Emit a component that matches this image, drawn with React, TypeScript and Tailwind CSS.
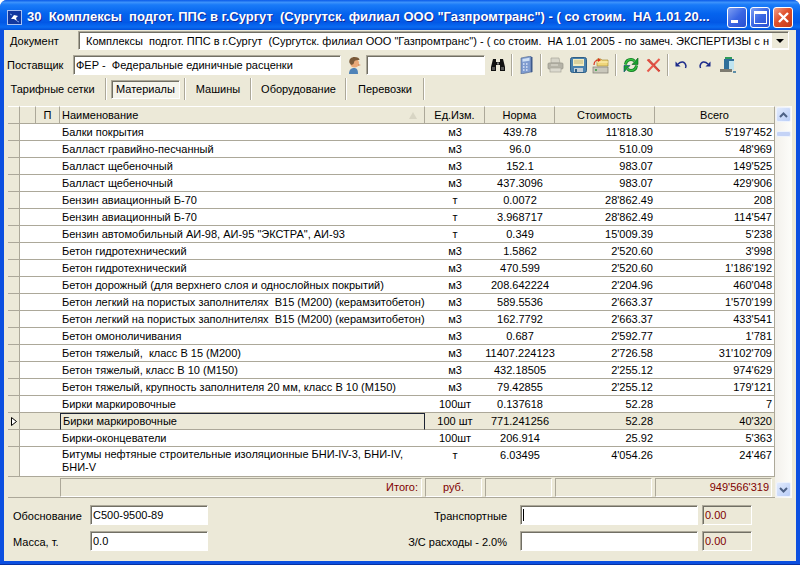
import type { ReactNode } from 'react';

const rows = [
  ['Балки покрытия', 'м3', '439.78', "11'818.30", "5'197'452"],
  ['Балласт гравийно-песчанный', 'м3', '96.0', '510.09', "48'969"],
  ['Балласт щебеночный', 'м3', '152.1', '983.07', "149'525"],
  ['Балласт щебеночный', 'м3', '437.3096', '983.07', "429'906"],
  ['Бензин авиационный Б-70', 'т', '0.0072', "28'862.49", '208'],
  ['Бензин авиационный Б-70', 'т', '3.968717', "28'862.49", "114'547"],
  ['Бензин автомобильный АИ-98, АИ-95 "ЭКСТРА", АИ-93', 'т', '0.349', "15'009.39", "5'238"],
  ['Бетон гидротехнический', 'м3', '1.5862', "2'520.60", "3'998"],
  ['Бетон гидротехнический', 'м3', '470.599', "2'520.60", "1'186'192"],
  ['Бетон дорожный (для верхнего слоя и однослойных покрытий)', 'м3', '208.642224', "2'204.96", "460'048"],
  ['Бетон легкий на пористых заполнителях  В15 (М200) (керамзитобетон)', 'м3', '589.5536', "2'663.37", "1'570'199"],
  ['Бетон легкий на пористых заполнителях  В15 (М200) (керамзитобетон)', 'м3', '162.7792', "2'663.37", "433'541"],
  ['Бетон омоноличивания', 'м3', '0.687', "2'592.77", "1'781"],
  ['Бетон тяжелый,  класс В 15 (М200)', 'м3', '11407.224123', "2'726.58", "31'102'709"],
  ['Бетон тяжелый, класс В 10 (М150)', 'м3', '432.18505', "2'255.12", "974'629"],
  ['Бетон тяжелый, крупность заполнителя 20 мм, класс В 10 (М150)', 'м3', '79.42855', "2'255.12", "179'121"],
  ['Бирки маркировочные', '100шт', '0.137618', '52.28', '7'],
  ['Бирки маркировочные', '100 шт', '771.241256', '52.28', "40'320"],
  ['Бирки-оконцеватели', '100шт', '206.914', '25.92', "5'363"],
  ['Битумы нефтяные строительные изоляционные БНИ-IV-3, БНИ-IV, БНИ-V', 'т', '6.03495', "4'054.26", "24'467"],
];

const SELECTED = 17;
const sunken =
  'border border-t-[#aca899] border-l-[#aca899] border-r-white border-b-white shadow-[inset_1px_1px_0_#716f64]';

function ToolSep() {
  return <div className="mx-[3px] h-[22px] w-[2px] shrink-0 border-l border-r border-l-[#aca899] border-r-white" />;
}

function AppIcon() {
  return (
    <svg width="15" height="15" viewBox="0 0 15 15" className="shrink-0">
      <rect x="0.5" y="0.5" width="14" height="14" fill="#12389f" stroke="#a9c2f2" />
      <path d="M4 9l3-4 4 1-2 2 1 3-3-2z" fill="#fff" />
      <path d="M3 4l2 1M10 11l2 1" stroke="#7fa4ee" />
    </svg>
  );
}

function WinButton({ kind }: { kind: 'min' | 'max' | 'close' }) {
  const bg =
    kind === 'close'
      ? 'bg-[linear-gradient(135deg,#f0a08a,#e0502c_45%,#c23a18)]'
      : 'bg-[linear-gradient(135deg,#7f9ff2,#3a66e4_50%,#2a4fd0)]';
  return (
    <div className={`flex h-[21px] w-[20px] items-center justify-center rounded-[3px] border border-white ${bg}`}>
      {kind === 'min' && <div className="mt-[8px] mr-[5px] h-[3px] w-[7px] bg-white" />}
      {kind === 'max' && <div className="h-[13px] w-[13px] border border-t-[3px] border-white" />}
      {kind === 'close' && (
        <svg width="13" height="13" viewBox="0 0 13 13">
          <path d="M2 2l9 9M11 2l-9 9" stroke="#fff" strokeWidth="2.4" />
        </svg>
      )}
    </div>
  );
}

function Person() {
  return (
    <svg width="16" height="20" viewBox="0 0 16 20">
      <path d="M3 19c0-4 2-6 5-6s4 2 4 6z" fill="#4f83b8" />
      <circle cx="8.5" cy="8" r="4.5" fill="#e8a878" />
      <path d="M3.5 8c-1-4 2-6 5-6s5 1 5 3c-2 0-4 0-5 1l-1 3-2 1z" fill="#7a5a3a" />
      <path d="M12 9l3 1-3 1z" fill="#d98a5a" />
    </svg>
  );
}

function Binoculars() {
  return (
    <svg width="16" height="16" viewBox="0 0 16 16">
      <path d="M3 2h3v3h4V2h3l2 8v4H10V8H6v6H1v-4z" fill="#111" />
      <rect x="2" y="10" width="3" height="3" fill="#555" />
      <rect x="11" y="10" width="3" height="3" fill="#555" />
      <rect x="7" y="5.5" width="2" height="2" fill="#888" />
    </svg>
  );
}

function Calc() {
  return (
    <svg width="13" height="18" viewBox="0 0 13 18">
      <path d="M1 2l10-2v16l-10 2z" fill="#7f9cd0" stroke="#51668c" strokeWidth="0.6" />
      <path d="M2.5 3l7-1.2v3l-7 1z" fill="#cfe0f5" />
      <path d="M3 8h1.500M6 8h1.500M3 11h1.500M6 11h1.500M3 14h1.500M6 14h1.500" stroke="#dfe8f7" strokeWidth="1.300" />
      <path d="M11 1h1.500v15l-1.500 .5z" fill="#3d5a8c" />
    </svg>
  );
}

function Printer() {
  return (
    <svg width="17" height="16" viewBox="0 0 17 16">
      <path d="M4 1h8l1 5H4z" fill="#d6d4c8" stroke="#a9a79b" strokeWidth="0.7" />
      <rect x="1" y="6" width="15" height="6" rx="1" fill="#b5b3a7" stroke="#97958a" strokeWidth="0.7" />
      <rect x="3" y="11" width="11" height="4" fill="#dcdacf" stroke="#a9a79b" strokeWidth="0.7" />
      <path d="M4 8h7" stroke="#e2e0d5" />
    </svg>
  );
}

function Save() {
  return (
    <svg width="17" height="16" viewBox="0 0 17 16">
      <rect x="0.5" y="0.5" width="16" height="15" rx="2" fill="#4a82ae" stroke="#2f5f86" />
      <rect x="3" y="2" width="11" height="7" fill="#f3ecc0" />
      <path d="M4 4h9M4 6h9" stroke="#c2b67a" />
      <rect x="4" y="11" width="9" height="4" fill="#c4cfd8" />
      <rect x="5" y="12" width="2" height="3" fill="#2f5f86" />
    </svg>
  );
}

function OpenFile() {
  return (
    <svg width="17" height="18" viewBox="0 0 17 18">
      <path d="M5 3h4l1 1h6v6H5z" fill="#efd67a" stroke="#a98f3a" strokeWidth="0.7" />
      <path d="M5 6h11" stroke="#fff3bd" />
      <rect x="1" y="11" width="15" height="6" fill="#c9c7bb" stroke="#7f7d72" strokeWidth="0.7" />
      <path d="M3 14h2" stroke="#2f9a3a" strokeWidth="1.400" />
      <path d="M2 9c0-3 2-5 5-5" fill="none" stroke="#d8341c" strokeWidth="1.200" />
      <path d="M6 2l3 2-3 2z" fill="#d8341c" />
    </svg>
  );
}

function Refresh() {
  return (
    <svg width="16" height="16" viewBox="0 0 16 16">
      <path d="M2.500 7.500C3 4 5.500 2.500 8 2.500c1.500 0 2.500 .5 3.500 1.500" fill="none" stroke="#0f7a22" strokeWidth="3" />
      <path d="M2.500 7.500C3 4 5.500 2.500 8 2.500c1.500 0 2.500 .5 3.500 1.500" fill="none" stroke="#35c23f" strokeWidth="1.400" />
      <path d="M15 1v6.500H9z" fill="#16a02c" stroke="#0b5a16" strokeWidth="0.6" />
      <path d="M13.500 8.500C13 12 10.500 13.500 8 13.500c-1.500 0-2.500-.5-3.500-1.500" fill="none" stroke="#0f7a22" strokeWidth="3" />
      <path d="M13.500 8.500C13 12 10.500 13.500 8 13.500c-1.500 0-2.500-.5-3.500-1.500" fill="none" stroke="#35c23f" strokeWidth="1.400" />
      <path d="M1 15V8.500h6z" fill="#16a02c" stroke="#0b3f7a" strokeWidth="0.6" />
    </svg>
  );
}

function RedX() {
  return (
    <svg width="15" height="15" viewBox="0 0 15 15">
      <path d="M1.500 1.500L13.500 13.500" stroke="#e0483c" strokeWidth="2" />
      <path d="M13.500 1L1.500 13.500" stroke="#e8584a" strokeWidth="2" />
      <path d="M3 1l11 12" stroke="#a52820" strokeWidth="0.6" />
    </svg>
  );
}

function Arrow({ flip }: { flip?: boolean }) {
  return (
    <svg width="13" height="10" viewBox="0 0 13 10" className={flip ? '-scale-x-100' : ''}>
      <path d="M3 4c3-3 7-3 8 2l-.5 2" fill="none" stroke="#1b2a8a" strokeWidth="1.400" />
      <path d="M0.500 1.500l0 5 5 0z" fill="#1b2a8a" />
    </svg>
  );
}

function ExitDoor() {
  return (
    <svg width="17" height="18" viewBox="0 0 17 18">
      <rect x="5" y="1" width="7" height="2" fill="#2f9a5a" />
      <rect x="4" y="3" width="10" height="11" fill="#2f6f9a" />
      <rect x="9" y="5" width="5" height="9" fill="#bfe4f0" />
      <rect x="0" y="13" width="12" height="3" fill="#7d7b70" />
      <path d="M13 16l3 0" stroke="#2f6f9a" strokeWidth="1.500" />
    </svg>
  );
}

function ScrollButton({ down }: { down?: boolean }) {
  return (
    <div className="flex h-[15px] w-[15px] items-center justify-center rounded-[2px] border border-[#eef3fd] bg-[linear-gradient(135deg,#e2ebfd,#b9cdf7)]">
      <svg width="9" height="6" viewBox="0 0 9 6" className={down ? 'rotate-180' : ''}>
        <path d="M1 5l3.500-3.500L8 5" fill="none" stroke="#4d6185" strokeWidth="2" />
      </svg>
    </div>
  );
}

function Tab({ label, className, active }: { label: string; className: string; active?: boolean }) {
  return (
    <button
      type="button"
      className={`flex h-[19px] shrink-0 items-center justify-center ${className} ${active ? `${sunken} bg-[#f5f4ec]` : ''}`}
    >
      {label}
    </button>
  );
}

function Etched() {
  return <div className="h-[22px] w-[2px] shrink-0 border-l border-r border-l-[#aca899] border-r-white" />;
}

function Th({ children, className = '' }: { children?: ReactNode; className?: string }) {
  return (
    <th className={`h-[18px] overflow-hidden border-r border-b border-t border-t-white border-r-[#aca899] border-b-[#aca899] bg-[#ece9d8] p-0 text-center font-normal ${className}`}>
      {children}
    </th>
  );
}

function FootCell({ children, className = '' }: { children?: ReactNode; className?: string }) {
  return (
    <td className="h-[21px] border-b border-b-[#aca899] p-0 pr-[3px]">
      <div className={`flex h-[19px] items-center border border-t-[#aca899] border-l-[#aca899] border-r-white border-b-white text-[#800000] ${className}`}>
        {children}
      </div>
    </td>
  );
}

export default function App() {
  return (
    <div className="flex h-[565px] w-[800px] flex-col overflow-hidden rounded-t-[7px] bg-[#0b4fe0] font-['Liberation_Sans',Arial,sans-serif] text-[11px] leading-[14px] text-black">
      {/* Title bar */}
      <div className="flex h-[30px] shrink-0 items-center bg-[linear-gradient(180deg,#0a5ae8_0%,#3c92fb_8%,#1a7bf8_16%,#0564ee_45%,#0258e6_75%,#0a6cf2_90%,#0350d8_100%)] pt-[4px] pr-[7px] pl-[7px]">
        <AppIcon />
        <div className="ml-[5px] flex-1 overflow-hidden whitespace-pre text-[13px] font-bold text-white [text-shadow:1px_1px_0_#0f2a9a]">
          {'30  Комплексы  подгот. ППС в г.Сургут  (Сургутск. филиал ООО "Газпромтранс") - ( со стоим.  НА 1.01 20...'}
        </div>
        <div className="flex gap-[3px]">
          <WinButton kind="min" />
          <WinButton kind="max" />
          <WinButton kind="close" />
        </div>
      </div>

      {/* Window body */}
      <div className="mx-[4px] flex flex-1 flex-col bg-[#ece9d8]">
        {/* Document */}
        <div className="flex h-[24px] shrink-0 pt-[1px]">
          <div className="flex h-[19px] w-[74px] items-center pl-[6px]">Документ</div>
          <div className={`flex h-[19px] w-[711px] items-center bg-white pl-[7px] ${sunken}`}>
            <div className="flex-1 overflow-hidden whitespace-pre">
              {'Комплексы  подгот. ППС в г.Сургут  (Сургутск. филиал ООО "Газпромтранс") - ( со стоим.  НА 1.01 2005 - по замеч. ЭКСПЕРТИЗЫ с н'}
            </div>
            <div className="flex h-[15px] w-[16px] shrink-0 items-center justify-center bg-[#ece9d8]">
              <div className="h-0 w-0 border-x-[4px] border-t-[4px] border-x-transparent border-t-black" />
            </div>
          </div>
        </div>

        {/* Supplier + toolbar */}
        <div className="flex h-[24px] shrink-0 items-start pt-[1px]">
          <div className="flex h-[20px] w-[69px] items-center pl-[3px]">Поставщик</div>
          <div className={`flex h-[20px] w-[268px] items-center whitespace-pre bg-white pl-[2px] ${sunken}`}>{'ФЕР -  Федеральные единичные расценки'}</div>
          <div className="flex h-[20px] w-[25px] items-center justify-center pl-[1px]">
            <Person />
          </div>
          <div className={`h-[20px] w-[119px] bg-white ${sunken}`} />
          <div className="flex h-[20px] items-center">
            <div className="mr-[2px] ml-[5px]"><Binoculars /></div>
            <ToolSep />
            <div className="mr-[4px] ml-[4px]"><Calc /></div>
            <ToolSep />
            <div className="ml-[2px]"><Printer /></div>
            <div className="ml-[6px]"><Save /></div>
            <div className="mr-[3px] ml-[5px]"><OpenFile /></div>
            <ToolSep />
            <div className="ml-[3px]"><Refresh /></div>
            <div className="mr-[3px] ml-[7px]"><RedX /></div>
            <ToolSep />
            <div className="ml-[3px]"><Arrow /></div>
            <div className="ml-[10px]"><Arrow flip /></div>
            <div className="ml-[9px]"><ExitDoor /></div>
          </div>
        </div>

        {/* Tabs */}
        <div className="flex h-[28px] shrink-0 items-start">
          <div className="flex h-[22px] items-center">
            <Tab label="Тарифные сетки" className="w-[101px] pr-[4px]" />
            <Etched />
            <div className="w-[4px]" />
            <Tab label="Материалы" className="w-[69px]" active />
            <div className="w-[4px]" />
            <Etched />
            <Tab label="Машины" className="w-[64px]" />
            <Etched />
            <Tab label="Оборудование" className="w-[93px]" />
            <Etched />
            <Tab label="Перевозки" className="w-[76px]" />
            <Etched />
          </div>
        </div>

        {/* Grid + scrollbar */}
        <div className="ml-[4px] flex shrink-0">
          <table className="w-[767px] table-fixed border-separate border-spacing-0">
            <colgroup>
              <col className="w-[12px]" />
              <col className="w-[16px]" />
              <col className="w-[24px]" />
              <col className="w-[365px]" />
              <col className="w-[60px]" />
              <col className="w-[70px]" />
              <col className="w-[100px]" />
              <col className="w-[120px]" />
            </colgroup>
            <thead>
              <tr>
                <Th />
                <Th />
                <Th>П</Th>
                <Th className="relative pl-[2px] text-left">
                  Наименование
                  <span className="absolute top-[5px] right-[7px] h-0 w-0 border-x-[4px] border-b-[7px] border-x-transparent border-b-[#d8d5c4]" />
                </Th>
                <Th>Ед.Изм.</Th>
                <Th>Норма</Th>
                <Th>Стоимость</Th>
                <Th>Всего</Th>
              </tr>
            </thead>
            <tbody>
              {rows.map((r, i) => {
                const sel = i === SELECTED;
                const last = i === rows.length - 1;
                const bg = sel ? 'bg-[#ece9d8]' : 'bg-white';
                const base = `border-b border-b-[#aca899] p-0 align-top ${last ? 'h-[30px]' : 'h-[17px]'}`;
                const cell = `${base} ${bg}`;
                return (
                  <tr key={i}>
                    <td className={`border-r border-r-[#aca899] bg-[#ece9d8] ${base}`}>
                      {sel && (
                        <svg width="8" height="9" viewBox="0 0 8 9" className="mt-[4px] ml-[2px]">
                          <path d="M1.500 .5l5 4-5 4z" fill="#fff" stroke="#000" />
                        </svg>
                      )}
                    </td>
                    <td className={cell} />
                    <td className={cell} />
                    <td className={`${cell} ${sel ? 'border border-[#1c2333]' : 'pt-[1px]'} pl-[2px] ${last ? 'leading-[13px]' : 'overflow-hidden whitespace-pre'}`}>
                      {r[0]}
                    </td>
                    <td className={`${cell} whitespace-nowrap pt-[1px] text-center`}>{r[1]}</td>
                    <td className={`${cell} overflow-hidden whitespace-nowrap pt-[1px] text-center`}>{r[2]}</td>
                    <td className={`${cell} pt-[1px] pr-[2px] text-right`}>{r[3]}</td>
                    <td className={`${cell} border-r border-r-[#aca899] pt-[1px] pr-[2px] text-right`}>{r[4]}</td>
                  </tr>
                );
              })}
            </tbody>
            <tfoot>
              <tr>
                <td className="h-[21px] border-b border-b-[#aca899] p-0" />
                <td className="h-[21px] border-b border-b-[#aca899] p-0" />
                <td className="h-[21px] border-b border-b-[#aca899] p-0" />
                <FootCell className="justify-end pr-[3px]">Итого:</FootCell>
                <FootCell className="justify-center">руб.</FootCell>
                <FootCell />
                <FootCell />
                <FootCell className="justify-end pr-[2px]">949'566'319</FootCell>
              </tr>
            </tfoot>
          </table>
          <div className="flex w-[17px] flex-col items-center bg-[linear-gradient(90deg,#f3f1ec,#fdfdfa)] py-[1px]">
            <ScrollButton />
            <div className="mt-[9px] h-[6px] w-[15px] rounded-[2px] border border-[#eef3fd] bg-[#c4d3f6]" />
            <div className="flex-1" />
            <ScrollButton down />
          </div>
        </div>

        {/* Bottom fields */}
        <div className="flex flex-col gap-[6px] pt-[7px]">
          <div className="flex">
            <div className="flex h-[20px] w-[86px] items-center pt-[2px] pl-[9px]">Обоснование</div>
            <div className={`flex h-[20px] w-[118px] items-center bg-white pl-[2px] ${sunken}`}>С500-9500-89</div>
            <div className="flex h-[20px] w-[299px] items-center justify-end pt-[2px]">Транспортные</div>
            <div className={`ml-[13px] flex h-[20px] w-[178px] items-center bg-white pl-[2px] ${sunken}`}>
              <div className="h-[12px] w-px bg-black" />
            </div>
            <div className={`ml-[4px] flex h-[20px] w-[50px] items-center pl-[2px] text-[#800000] ${sunken}`}>0.00</div>
          </div>
          <div className="flex">
            <div className="flex h-[20px] w-[86px] items-center pt-[2px] pl-[9px]">Масса, т.</div>
            <div className={`flex h-[20px] w-[118px] items-center bg-white pl-[2px] ${sunken}`}>0.0</div>
            <div className="flex h-[20px] w-[299px] items-center justify-end pt-[2px]">З/С расходы - 2.0%</div>
            <div className={`ml-[13px] h-[20px] w-[178px] bg-white ${sunken}`} />
            <div className={`ml-[4px] flex h-[20px] w-[50px] items-center pl-[2px] text-[#800000] ${sunken}`}>0.00</div>
          </div>
        </div>
      </div>
      <div className="h-[4px] shrink-0 border-b border-b-[#0831a0]" />
    </div>
  );
}
